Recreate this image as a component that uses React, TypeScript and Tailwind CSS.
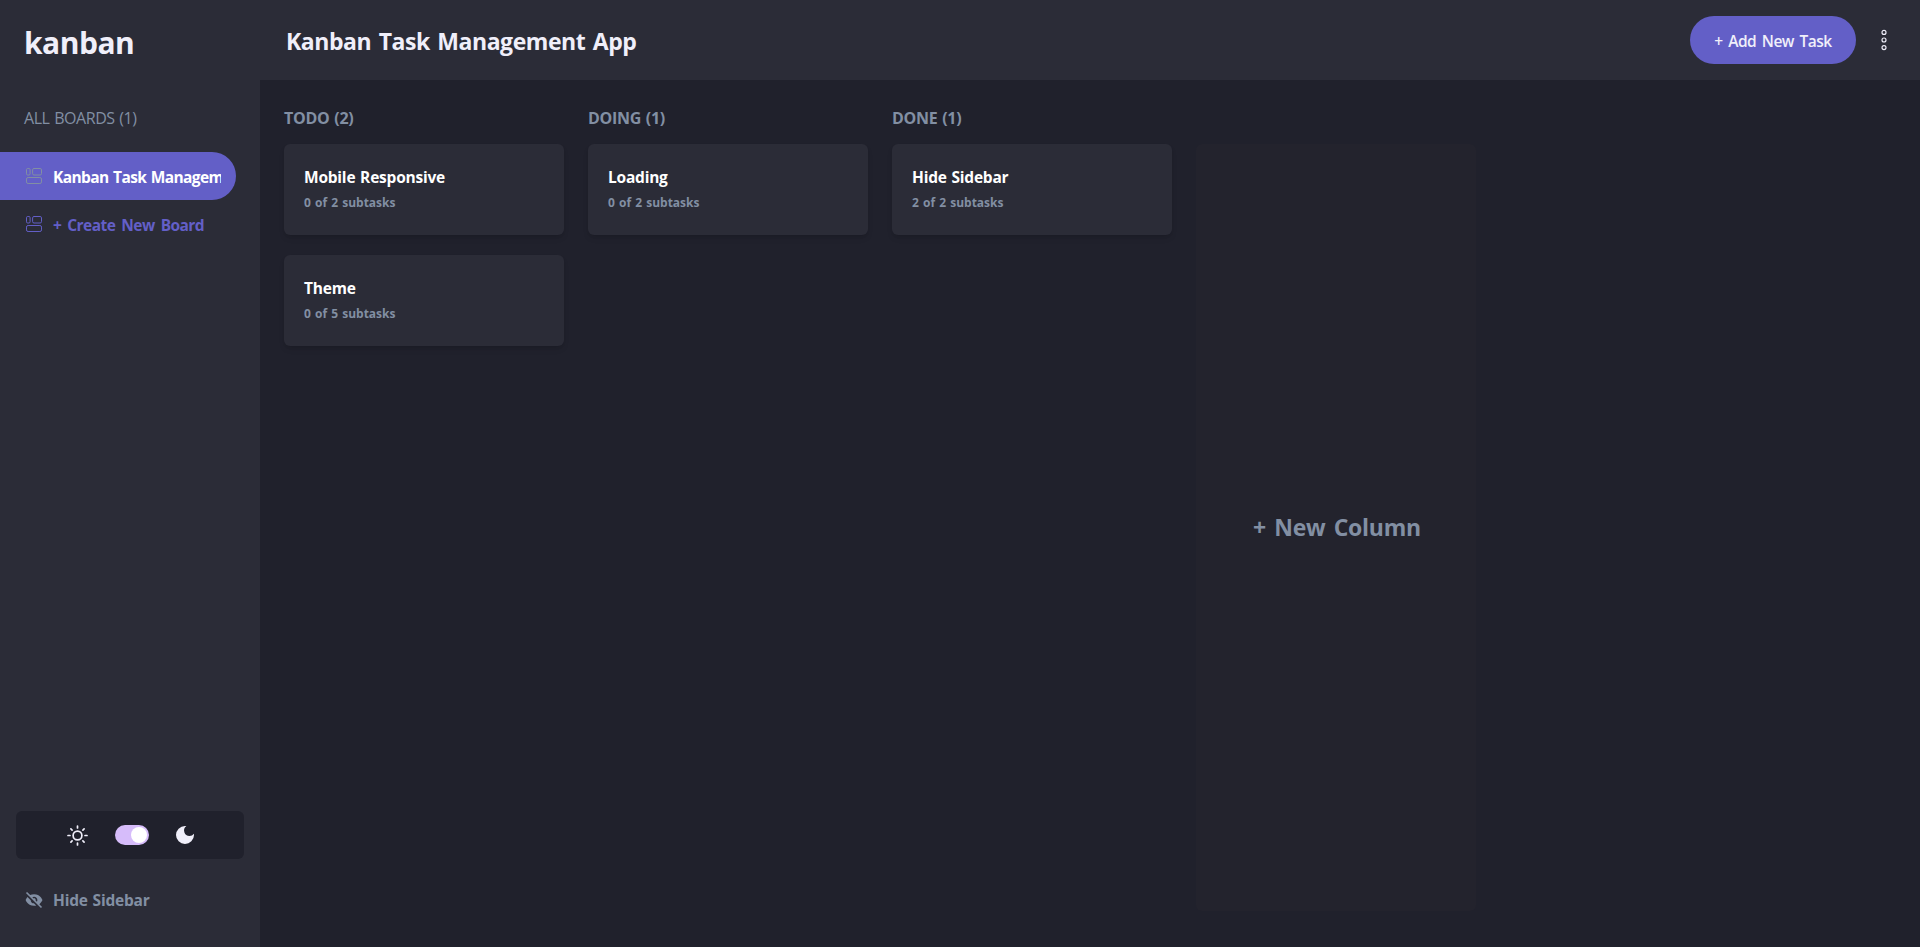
import { useState } from "react";
import { BiSolidHide } from "react-icons/bi";
import { MdDarkMode } from "react-icons/md";

type Task = { title: string; done: number; total: number };
type Column = { name: string; tasks: Task[] };

const columns: Column[] = [
  {
    name: "TODO",
    tasks: [
      { title: "Mobile Responsive", done: 0, total: 2 },
      { title: "Theme", done: 0, total: 5 },
    ],
  },
  { name: "DOING", tasks: [{ title: "Loading", done: 0, total: 2 }] },
  { name: "DONE", tasks: [{ title: "Hide Sidebar", done: 2, total: 2 }] },
];

function BoardIcon() {
  return (
    <svg className="h-4 w-4 shrink-0" viewBox="0 0 16 16" fill="none" stroke="currentColor" strokeWidth="1">
      <rect x="0.5" y="0.5" width="3.6" height="6.5" rx="1.2" />
      <rect x="6.6" y="0.5" width="8.9" height="6.5" rx="1.4" />
      <rect x="0.5" y="9.5" width="15" height="6" rx="1.6" />
    </svg>
  );
}

function SunIcon() {
  return (
    <svg className="h-[21px] w-[21px]" viewBox="0 0 21 21" fill="none" stroke="currentColor" strokeWidth="1.7" strokeLinecap="round">
      <circle cx="10.5" cy="10.5" r="4.4" />
      <path d="M10.5 1v2M10.5 18v2M1 10.5h2M18 10.5h2M3.9 3.9l1.2 1.2M15.9 15.9l1.2 1.2M3.9 17.1l1.2-1.2M15.9 5.1l1.2-1.2" />
    </svg>
  );
}

function DotsIcon() {
  return (
    <svg className="h-[22px] w-2" viewBox="0 0 8 22" fill="none" stroke="currentColor" strokeWidth="1.15">
      <circle cx="4" cy="3.4" r="2" />
      <circle cx="4" cy="11" r="2" />
      <circle cx="4" cy="18.6" r="2" />
    </svg>
  );
}

function Sidebar() {
  const [dark, setDark] = useState(true);
  return (
    <aside className="flex w-[260px] shrink-0 flex-col bg-[#2b2c37]">
      <div className="flex h-20 items-center pl-6 pt-1.5">
        <h1 className="text-[30px] font-bold leading-9 tracking-[-0.5px]">kanban</h1>
      </div>
      <p className="mt-[26px] pl-6 text-base leading-6 tracking-[-0.45px] text-[#828fa3] [word-spacing:1px]">
        ALL BOARDS (1)
      </p>
      <nav className="mt-[22px] flex flex-col">
        <button className="flex h-12 w-[236px] items-center gap-[11px] rounded-r-full bg-[#635fc7] pl-[26px] text-[15.5px] font-bold text-white">
          <span className="text-[#828fa3]"><BoardIcon /></span>
          <span className="mt-0.5 h-[21px] w-[168px] overflow-hidden whitespace-nowrap text-left leading-[21px] tracking-[-0.6px] [word-spacing:1px]">
            Kanban Task Management App
          </span>
        </button>
        <button className="flex h-12 items-center gap-[11px] pl-[26px] text-[15.5px] font-bold text-[#635fc7]">
          <BoardIcon />
          <span className="mt-[3px] whitespace-nowrap tracking-[-0.55px] [word-spacing:2.5px]">+ Create New Board</span>
        </button>
      </nav>
      <div className="mx-4 mt-auto flex h-12 items-center justify-center rounded-md bg-[#20212c] pl-1">
        <SunIcon />
        <button
          role="switch"
          aria-checked={dark}
          onClick={() => setDark(!dark)}
          className="ml-[27px] mr-6 flex h-5 w-[34px] items-center justify-end rounded-full bg-[#d6bcfa] pr-0.5"
        >
          <span className="h-4 w-4 rounded-full bg-white" />
        </button>
        <MdDarkMode className="h-6 w-6" />
      </div>
      <button className="mb-[23px] mt-[17px] flex h-12 items-center gap-[9px] pl-6 text-[15.5px] font-bold text-[#828fa3]">
        <BiSolidHide className="h-5 w-5" />
        <span className="mt-px tracking-[-0.2px] [word-spacing:1px]">Hide Sidebar</span>
      </button>
    </aside>
  );
}

function TaskCard({ task }: { task: Task }) {
  return (
    <article className="flex h-[91px] w-[280px] flex-col rounded-md bg-[#2b2c37] px-5 pt-[21px] shadow-md">
      <h3 className="text-[15.5px] font-bold leading-6 tracking-[-0.22px] text-white [word-spacing:1px]">{task.title}</h3>
      <p className="mt-1.5 text-xs font-bold leading-4 text-[#828fa3] [word-spacing:1px]">
        {task.done} of {task.total} subtasks
      </p>
    </article>
  );
}

export default function App() {
  return (
    <div className="flex h-[947px] overflow-hidden bg-[#20212c] font-['Open_Sans','Noto_Sans',sans-serif] text-[#f0effa]">
      <Sidebar />
      <div className="flex min-w-0 flex-1 flex-col">
        <header className="flex h-20 shrink-0 items-center bg-[#2b2c37] pl-[26px] pr-8">
          <h2 className="pt-0.5 text-[23px] font-bold leading-8 tracking-[-0.45px] [word-spacing:2px]">
            Kanban Task Management App
          </h2>
          <button className="ml-auto h-12 w-[166px] rounded-full bg-[#635fc7] pt-[3px] text-[15.5px] font-semibold tracking-[-0.5px] [word-spacing:2px]">
            + Add New Task
          </button>
          <button className="ml-6"><DotsIcon /></button>
        </header>
        <main className="flex flex-1 gap-6 px-6 pb-9 pt-[26px]">
          {columns.map((column) => (
            <section key={column.name} className="flex w-[280px] flex-col">
              <h3 className="text-base font-bold leading-6 tracking-[-0.3px] text-[#828fa3] [word-spacing:1px]">
                {column.name} ({column.tasks.length})
              </h3>
              <div className="mt-3.5 flex flex-col gap-5">
                {column.tasks.map((task) => (
                  <TaskCard key={task.title} task={task} />
                ))}
              </div>
            </section>
          ))}
          <button className="mt-[38px] w-[280px] rounded-md bg-[#23232d] pb-px pl-0.5 text-[23px] font-bold tracking-[-0.25px] text-[#828fa3] [word-spacing:2.5px]">
            + New Column
          </button>
        </main>
      </div>
    </div>
  );
}
